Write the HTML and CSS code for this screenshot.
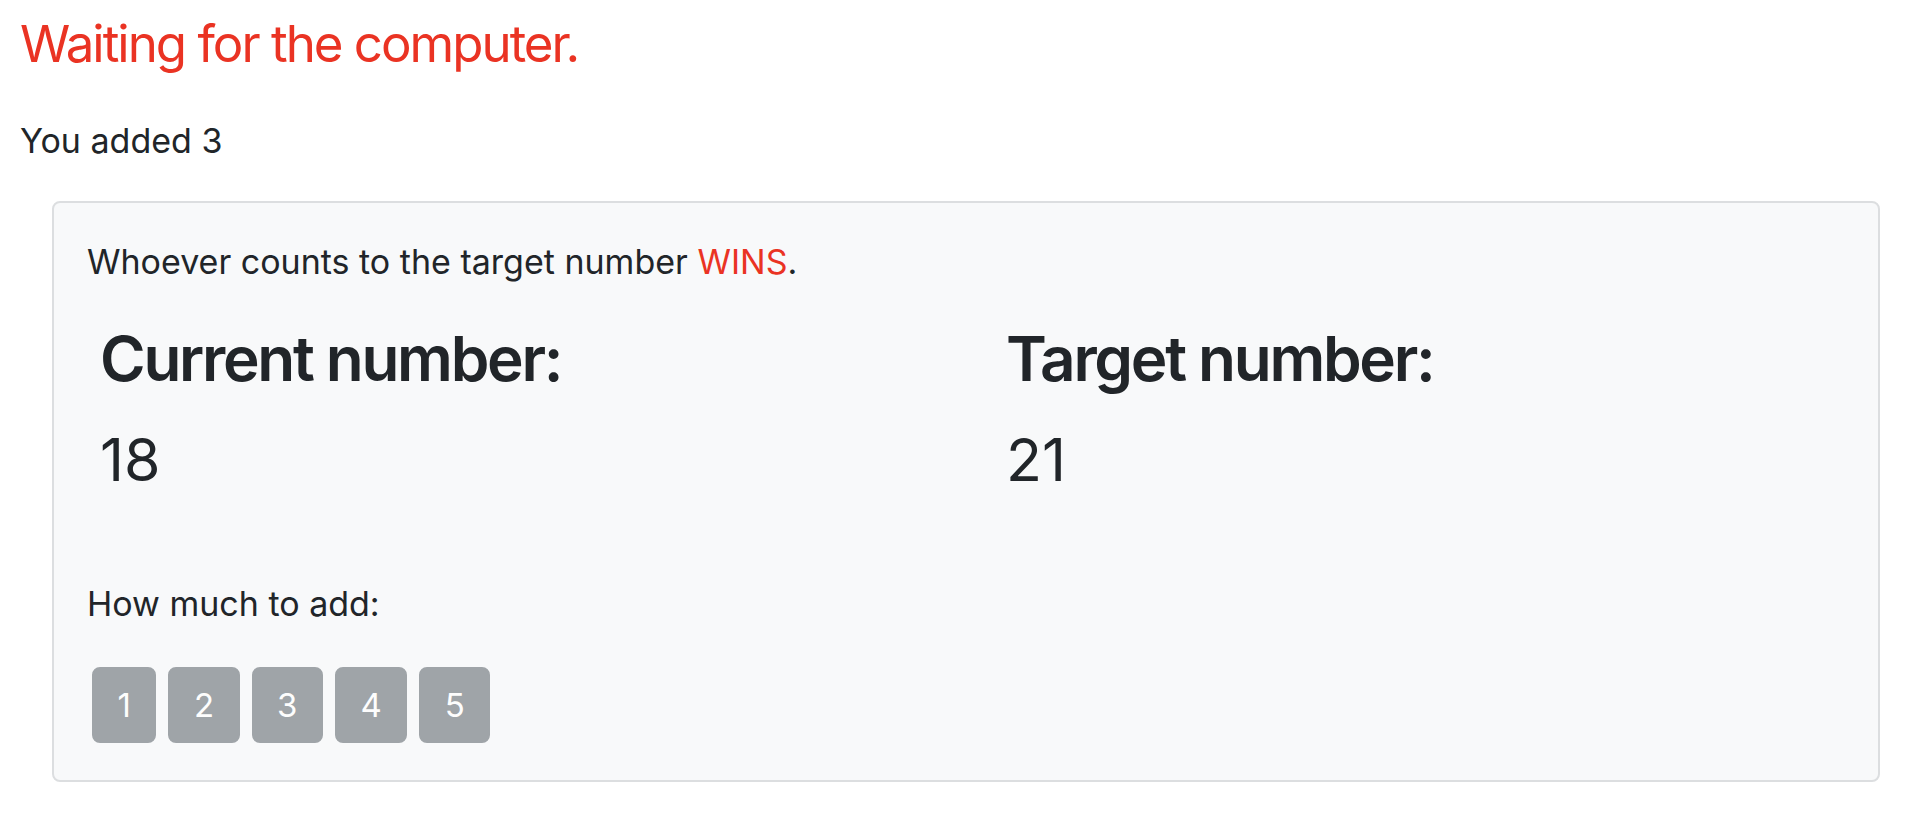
FILE: index.html
```html
<!DOCTYPE html>
<html lang="en">
<head>
<meta charset="utf-8">
<title>Count to 21</title>
<link rel="stylesheet" href="styles.css">
</head>
<body>
<main class="page">
  <h4 class="status">Waiting for the computer.</h4>
  <p class="last-move">You added 3</p>
  <section class="card">
    <p class="rule">Whoever counts to the target number <span class="win">WINS</span>.</p>
    <div class="numbers">
      <div class="col">
        <h3 class="label">Current number:</h3>
        <h3 class="value">18</h3>
      </div>
      <div class="col">
        <h3 class="label">Target number:</h3>
        <h3 class="value">21</h3>
      </div>
    </div>
    <p class="prompt">How much to add:</p>
    <div class="buttons">
      <button class="btn" disabled>1</button>
      <button class="btn" disabled>2</button>
      <button class="btn" disabled>3</button>
      <button class="btn" disabled>4</button>
      <button class="btn" disabled>5</button>
    </div>
  </section>
</main>
</body>
</html>
```

FILE: styles.css
```css
* { box-sizing: border-box; }
html, body { margin: 0; padding: 0; background: #fff; }
body {
  font-family: Inter, "Noto Sans", "Liberation Sans", sans-serif;
  color: #212529;
  font-size: 34px;
  line-height: 51px;
}
.page {
  padding: 13px 32px 0 20px;
}
.status {
  margin: 0 0 40px 0;
  font-size: 51px;
  line-height: 62px;
  font-weight: 400;
  letter-spacing: -2px;
  color: #ea3323;
}
.last-move {
  margin: 0 0 35px 0;
}
.card {
  margin-left: 32px;
  background: #f8f9fa;
  border: 2px solid #dcdee0;
  border-radius: 8px;
  padding: 33px 33px 37px 33px;
}
.rule { margin: 0; }
.win { color: #ea3323; }
.numbers {
  display: grid;
  grid-template-columns: 906px 1fr;
  padding-left: 13px;
  margin-top: 35px;
}
.label {
  margin: 0;
  font-size: 62px;
  line-height: 74px;
  font-weight: 600;
  letter-spacing: -2.3px;
}
.value {
  margin: 28px 0 0 0;
  font-size: 59px;
  line-height: 71px;
  font-weight: 400;
}
.prompt { margin: 83px 0 0 0; }
.buttons {
  display: flex;
  gap: 12px;
  margin-top: 38px;
  padding-left: 5px;
}
.btn {
  font-family: inherit;
  font-size: 33px;
  line-height: 48px;
  padding: 12px 23.5px;
  border: 2px solid #9fa4a8;
  background: #9fa4a8;
  color: #fdfdfd;
  border-radius: 8px;
}
```
